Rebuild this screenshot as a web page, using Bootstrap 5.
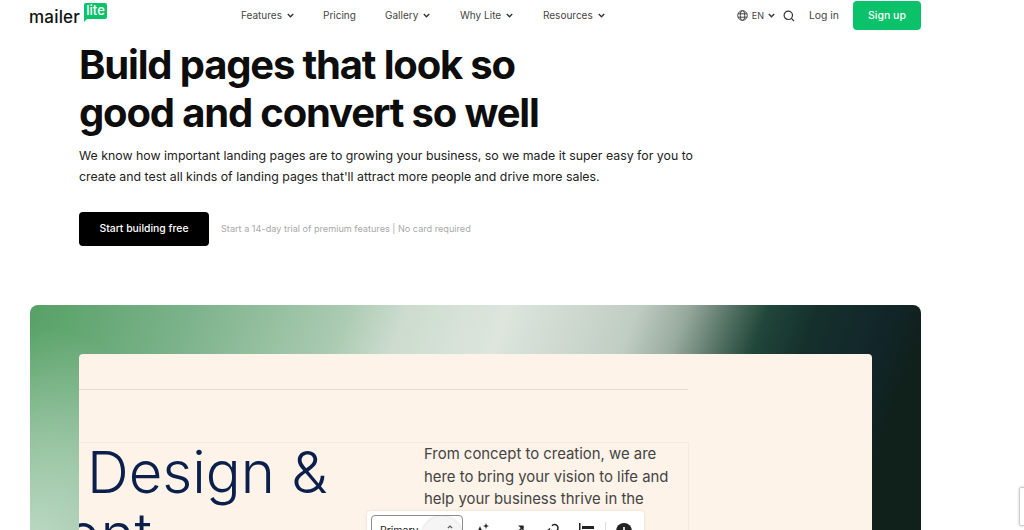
<!DOCTYPE html>
<html lang="en">
<head>
<meta charset="utf-8">
<title>MailerLite landing pages</title>
<link href="https://cdn.jsdelivr.net/npm/bootstrap@5.3.0/dist/css/bootstrap.min.css" rel="stylesheet">
<style>
html,body{height:530px;overflow:hidden;background:#fff}
body{font-family:Inter,"Liberation Sans",sans-serif;color:#111}
.shell{width:892px;margin-left:29px}
.topbar{height:31px;padding-top:1px;font-size:10px;color:#444}
.logo-box{width:78px;flex-shrink:0}
.logo-word{font-size:17px;font-weight:500;color:#111;line-height:1;margin-top:8px;letter-spacing:.2px}
.logo-bubble{width:24px;height:16px;margin:2px 0 0 4px;background:#09c269;border-radius:2px 2px 2px 0;color:#fff;font-size:13px;font-weight:500;line-height:15px;text-align:center;align-self:flex-start;position:relative}
.logo-bubble::after{content:"";position:absolute;left:0;top:15px;border-top:4px solid #09c269;border-right:4px solid transparent}
.menu-a{margin-left:134px;margin-top:7px}
.menu-item{color:#444;text-decoration:none;white-space:nowrap;display:flex;align-items:center;gap:5px}
.chev{width:7px;height:5px;stroke:#333;stroke-width:1.4;fill:none;flex-shrink:0}
.m-features{width:82px}.m-pricing{width:62px}.m-gallery{width:75px}.m-why{width:83px}
.right-tools{margin-left:auto;color:#444}
.lang-code{font-size:9px}
.signup{background:#09c269;color:#fff;font-size:10.5px;font-weight:500;width:68px;height:29px;padding:0;line-height:29px;border:0;border-radius:4px;margin-left:14px}
.login{font-size:10.4px;margin-left:14px;color:#444}
.hero-wrap{padding-left:50px}
.hero-title{font-size:40px;font-weight:650;line-height:48px;letter-spacing:-1.17px;margin:10px 0 9px;color:#0d0d0d}
.hero-lead{font-size:12.35px;line-height:20.5px;color:#222;margin:0}
.hero-cta{margin-top:25px;gap:12px}
.btn-start{background:#000;color:#fff;font-size:10.4px;font-weight:500;width:130px;height:34px;padding:0;line-height:34px;border:0;border-radius:4px}
.cta-note{font-size:9.15px;color:#a8a8a8}
.panel{margin-top:59px;margin-left:1px;height:225px;border-radius:8px 8px 0 0;padding:49px 49px 0;overflow:hidden;
 background:
 radial-gradient(ellipse 170px 230px at 0 250px,rgba(255,255,255,.58) 0,rgba(255,255,255,.33) 50%,rgba(255,255,255,0) 100%),
 linear-gradient(110deg,#58a267 8px,#7bb28a 150px,#abcbb2 300px,#cddccf 356px,#dde5dd 450px,#c0cdc3 572px,#98aa9e 619px,#4b6b5c 666px,#20463a 695px,#15302c 742px,#12262a 808px,#10211c 846px)}
.sheet{background:#fef3e8;height:176px;border-radius:4px 4px 0 0;overflow:hidden;position:relative}
.rule-line{width:609px;height:1px;background:#e6dccb;margin-top:35px}
.copy-row{width:610px;height:160px;margin-top:52px;border:1px solid #f5ebdd;border-left:0}
.design-word{font-size:58px;font-weight:350;line-height:62px;color:#0b1f4d;white-space:nowrap;margin:-2px 0 0 8px;width:337px}
.design-second{margin-left:-21px}
.copy-text{font-size:14.9px;line-height:22.5px;color:#444;width:262px;margin-top:0}
.tool-strip{position:absolute;left:288px;top:157px;width:277px;height:60px;background:#fff;border-radius:4px;box-shadow:0 0 3px rgba(0,0,0,.12);padding:4px}
.sel-box{width:92px;height:40px;border:1px solid #8c8c8c;border-radius:4px;font-size:10.5px;padding:7px 8px;color:#222;position:relative;overflow:hidden}
.ripple{position:absolute;left:50px;top:0;width:40px;height:40px;border-radius:50%;background:#f5f5f5;box-shadow:0 0 3px rgba(0,0,0,.2)}
.ripple-caret{position:absolute;left:75px;top:9px}
.ti{position:absolute;top:12px}
.ti-sep{position:absolute;left:238px;top:11px;width:1px;height:20px;background:#ddd}
.recap{position:absolute;left:1019px;top:487px;width:8px;height:39px;background:#fff;border:1px solid #ccc;border-radius:2px;box-shadow:0 0 3px rgba(0,0,0,.2)}
</style>
</head>
<body>
<div class="shell">
  <nav class="topbar d-flex align-items-start">
    <div class="d-flex logo-box">
      <span class="logo-word">mailer</span>
      <span class="logo-bubble">lite</span>
    </div>
    <div class="d-flex menu-a">
      <a class="menu-item m-features" href="#">Features <svg class="chev" viewBox="0 0 7 5"><path d="M.8 1l2.7 2.7L6.2 1"/></svg></a>
      <a class="menu-item m-pricing" href="#">Pricing</a>
      <a class="menu-item m-gallery" href="#">Gallery <svg class="chev" viewBox="0 0 7 5"><path d="M.8 1l2.7 2.7L6.2 1"/></svg></a>
      <a class="menu-item m-why" href="#">Why Lite <svg class="chev" viewBox="0 0 7 5"><path d="M.8 1l2.7 2.7L6.2 1"/></svg></a>
      <a class="menu-item" href="#">Resources <svg class="chev" viewBox="0 0 7 5"><path d="M.8 1l2.7 2.7L6.2 1"/></svg></a>
    </div>
    <div class="right-tools d-flex align-items-center">
      <svg width="11" height="11" viewBox="0 0 11 11" fill="none" stroke="#444" stroke-width="1"><circle cx="5.5" cy="5.5" r="4.8"/><ellipse cx="5.5" cy="5.5" rx="2.2" ry="4.8"/><path d="M1 3.8h9M1 7.2h9"/></svg>
      <span class="ms-1 lang-code">EN</span>
      <svg class="chev ms-1" viewBox="0 0 7 5"><path d="M.8 1l2.7 2.7L6.2 1"/></svg>
      <svg class="ms-2" width="12" height="12" viewBox="0 0 12 12" fill="none" stroke="#333" stroke-width="1.2"><circle cx="5.3" cy="5.3" r="4.2"/><path d="M8.4 8.4L11 11"/></svg>
      <a class="menu-item login" href="#">Log in</a>
      <a class="btn signup" href="#">Sign up</a>
    </div>
  </nav>
  <section class="hero-wrap">
    <h1 class="hero-title">Build pages that look so<br>good and convert so well</h1>
    <p class="hero-lead">We know how important landing pages are to growing your business, so we made it super easy for you to<br>create and test all kinds of landing pages that'll attract more people and drive more sales.</p>
    <div class="d-flex align-items-center hero-cta">
      <a class="btn btn-start" href="#">Start building free</a>
      <span class="cta-note">Start a 14-day trial of premium features | No card required</span>
    </div>
  </section>
  <section class="panel">
    <div class="sheet">
      <div class="rule-line"></div>
      <div class="copy-row d-flex">
        <div class="design-word">Design &amp;<div class="design-second">ont</div></div>
        <div class="copy-text">From concept to creation, we are here to bring your vision to life and help your business thrive in the</div>
      </div>
      <div class="tool-strip d-flex">
        <div class="sel-box">Primary<span class="ripple"></span>
          <svg class="ripple-caret" width="6" height="4" viewBox="0 0 6 4" fill="none" stroke="#555" stroke-width="1.2"><path d="M.8 3.2L3 1l2.2 2.2"/></svg>
        </div>
        <svg class="ti" style="left:107px" width="16" height="14" viewBox="0 0 16 14" fill="#222"><path d="M6 3l1.4 3.6L11 8 7.4 9.4 6 13 4.6 9.4 1 8l3.6-1.4z"/><path d="M12 0l.8 2.2L15 3l-2.2.8L12 6l-.8-2.2L9 3l2.2-.8z"/></svg>
        <svg class="ti" style="left:147px;top:13px" width="11" height="11" viewBox="0 0 12 12" fill="none" stroke="#222" stroke-width="1.6"><path d="M2 11L10 3"/><path d="M4.5 1.5h6v6z" fill="#222" stroke="none"/></svg>
        <svg class="ti" style="left:178px" width="15" height="15" viewBox="0 0 15 15" fill="none" stroke="#222" stroke-width="1.5"><path d="M7 2.8a3.4 3.4 0 1 1 5 4.6l-2 2"/><path d="M1.5 9L5 5.5M5 9l2-2"/></svg>
        <svg class="ti" style="left:212px" width="16" height="16" viewBox="0 0 16 16" fill="#222"><path d="M0 0h1.5v16H0zM3 3h12v3H3z"/></svg>
        <span class="ti-sep"></span>
        <svg class="ti" style="left:249px" width="16" height="16" viewBox="0 0 16 16"><circle cx="8" cy="8" r="8" fill="#222"/><path d="M8 4v8M4 8h8" stroke="#fff" stroke-width="1.6"/></svg>
      </div>
    </div>
  </section>
</div>
<div class="recap"></div>
<script src="https://cdn.jsdelivr.net/npm/bootstrap@5.3.0/dist/js/bootstrap.bundle.min.js"></script>
</body>
</html>
